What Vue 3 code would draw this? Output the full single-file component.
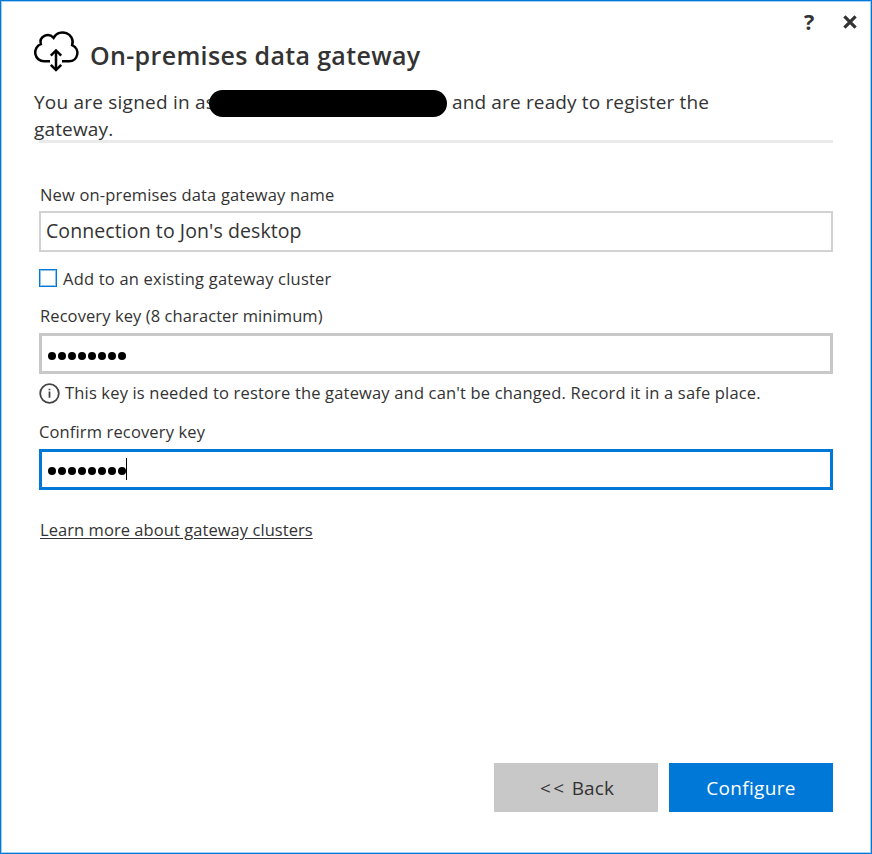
<script setup>
import { ref } from 'vue'

const gatewayName = ref("Connection to Jon's desktop")
const recoveryKey = ref('password')
const confirmKey = ref('password')
</script>

<template>
  <main class="dialog">
    <div class="window-actions">
      <button class="icon-button help" aria-label="Help">?</button>
      <button class="icon-button" aria-label="Close">
        <svg width="14" height="14" viewBox="0 0 14 14"><path d="M1.4 1.4 12.6 12.6M12.6 1.4 1.4 12.6" /></svg>
      </button>
    </div>

    <header class="header">
      <svg class="cloud" width="46" height="42" viewBox="0 0 46 42">
        <path d="M17 31.2H11A8.8 8.8 0 0 1 7.8 14.2C5.8 6.4 15.2 1.8 20.6 7.8C26.5-2.7 42.6 3.4 39.2 15.2C47.6 19 45.2 31.2 36 31.2H29" />
        <path d="M23 21V39.5M17.8 25.6 23 20.4 28.2 25.6M17.8 34.9 23 40.1 28.2 34.9" />
      </svg>
      <h1>On-premises data gateway</h1>
    </header>

    <div class="intro">
      <div class="intro-row">
        <span class="signed">You are signed in as</span>
        <span class="redacted"></span>
        <span class="ready">and are ready to register the</span>
      </div>
      <div class="intro-row">gateway.</div>
    </div>
    <div class="rule"></div>

    <form class="form">
      <label class="label l-name">New on-premises data gateway name</label>
      <div class="field name-field">{{ gatewayName }}</div>

      <div class="check-row">
        <span class="checkbox"></span>
        <span>Add to an existing gateway cluster</span>
      </div>

      <label class="label l-recovery">Recovery key (8 character minimum)</label>
      <div class="field key-field"><i v-for="n in recoveryKey.length" :key="n" class="dot"></i></div>

      <div class="hint">
        <svg width="21" height="21" viewBox="0 0 21 21">
          <circle cx="10.5" cy="10.5" r="9.3" />
          <path d="M10.5 8.6V14.8M10.5 5.7V7.3" />
        </svg>
        <span>This key is needed to restore the gateway and can't be changed. Record it in a safe place.</span>
      </div>

      <label class="label l-confirm">Confirm recovery key</label>
      <div class="field key-field focused"><i v-for="n in confirmKey.length" :key="n" class="dot"></i><span class="caret"></span></div>

      <a class="learn">Learn more about gateway clusters</a>
    </form>

    <footer class="footer">
      <button class="button back"><span class="chevrons">&lt;&lt;</span>Back</button>
      <button class="button configure">Configure</button>
    </footer>
  </main>
</template>

<style>
body { background: #fff; }
</style>

<style scoped>
.dialog {
  box-sizing: border-box;
  width: 872px;
  height: 854px;
  display: flex;
  flex-direction: column;
  border: 1px solid #0078d7;
  box-shadow: inset 0 0 0 1px #a6d0f3;
  padding: 0 38px 41px 39px;
  background: #fff;
  color: #333;
  font: 16.5px/22px "Open Sans", "Noto Sans", sans-serif;
}
button { font: inherit; border: 0; padding: 0; background: none; }
.window-actions {
  display: flex;
  justify-content: flex-end;
  align-items: center;
  gap: 29px;
  height: 28px;
  padding-top: 13px;
  box-sizing: border-box;
  margin-right: -24px;
}
.icon-button { display: flex; align-items: center; justify-content: center; width: 14px; height: 26px; color: #333; }
.icon-button svg { stroke: #333; stroke-width: 3.2; fill: none; }
.help { font-size: 21.5px; font-weight: 700; width: 10px; }
.header { display: flex; margin-left: -7px; height: 60px; }
.cloud { margin-top: 1px; flex: none; overflow: visible; fill: none; stroke: #000; stroke-width: 2.5; }
h1 {
  margin: 8px 0 0 11px;
  font-size: 25px;
  line-height: 36px;
  font-weight: 600;
  letter-spacing: 0.34px;
}
.intro { margin-left: -6px; font-size: 19px; line-height: 27px; letter-spacing: 0.15px; position: relative; z-index: 1; }
.intro-row { display: flex; height: 27px; white-space: nowrap; }
.signed { width: 175px; letter-spacing: 0.22px; }
.redacted { width: 238px; height: 27px; margin: 1px 5px 0 0; border-radius: 14px; background: #000; flex: none; z-index: 1; }
.rule { height: 3px; margin: -3px 0 0 -1px; background: #eaeaea; }
.form { display: flex; flex-direction: column; margin-top: 41px; }
.label { display: block; white-space: nowrap; }
.l-name { letter-spacing: 0.16px; }
.l-recovery { letter-spacing: 0.09px; margin-top: 15px; }
.l-confirm { letter-spacing: 0.14px; margin: 17px 0 0 -1px; }
.field {
  box-sizing: border-box;
  height: 41px;
  margin: 6px 0 0 -1px;
  border: 3px solid #c8c8c8;
  background: #fff;
}
.name-field {
  margin-top: 5px;
  border-width: 2px;
  border-color: #d2d2d2;
  padding-left: 5px;
  font-size: 19.5px;
  line-height: 35px;
  letter-spacing: 0.09px;
}
.check-row { display: flex; align-items: center; gap: 6px; height: 22px; margin: 16px 0 0 -1px; letter-spacing: 0.2px; }
.checkbox { box-sizing: border-box; width: 18px; height: 18px; margin-top: -2px; border: 1px solid #0078d7; box-shadow: inset 0 0 0 1px #8cc3ee; }
.key-field { display: flex; align-items: center; gap: 2px; padding: 4px 0 0 6px; }
.dot { width: 8px; height: 8px; border-radius: 50%; background: #000; }
.caret { width: 1px; height: 22px; margin: -4px 0 0 -2px; background: #000; }
.focused { padding-top: 2px; border-color: #0078d7; }
.hint { display: flex; gap: 5px; height: 22px; margin: 8px 0 0 -1px; white-space: nowrap; letter-spacing: 0.17px; }
.hint svg { flex: none; margin-top: 1px; fill: none; stroke: #444; stroke-width: 1.8; }
.learn { margin-top: 29px; letter-spacing: 0.06px; text-decoration: underline; text-underline-offset: 2px; align-self: flex-start; }
.footer { display: flex; justify-content: flex-end; gap: 11px; margin-top: auto; }
.button { width: 164px; height: 49px; font-size: 19px; }
.back { background: #c8c8c8; color: #333; letter-spacing: 0.1px; padding-left: 2px; }
.chevrons { letter-spacing: 2.5px; margin-right: 5px; }
.configure { background: #0078d7; color: #fff; letter-spacing: 0.3px; }
</style>
